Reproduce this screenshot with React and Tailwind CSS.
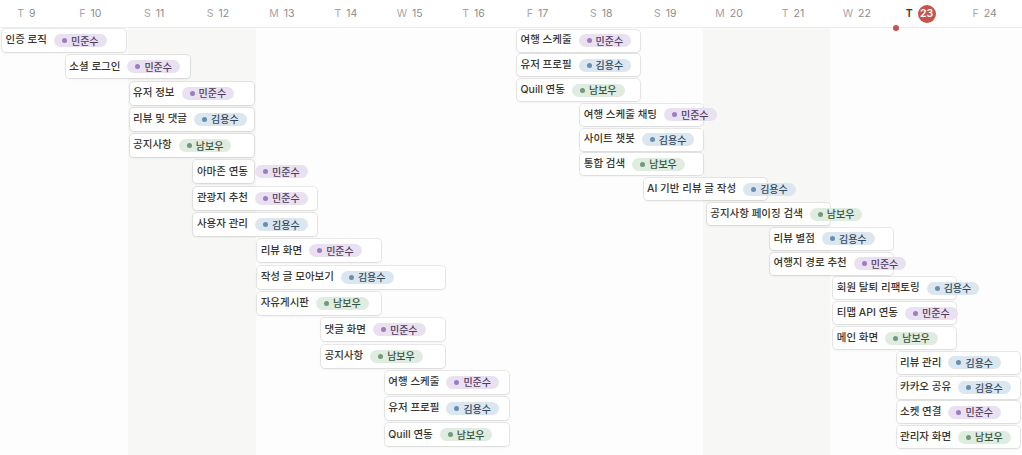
import React from "react";

const COL = 63.875;

const days = [
  ["T", "9"], ["F", "10"], ["S", "11"], ["S", "12"], ["M", "13"], ["T", "14"], ["W", "15"], ["T", "16"],
  ["F", "17"], ["S", "18"], ["S", "19"], ["M", "20"], ["T", "21"], ["W", "22"], ["T", "23"], ["F", "24"],
];
const shaded = [2, 3, 11, 12];

const left = [
  [0, 2, "인증 로직", "민준수"],
  [1, 2, "소셜 로그인", "민준수"],
  [2, 2, "유저 정보", "민준수"],
  [2, 2, "리뷰 및 댓글", "김용수"],
  [2, 2, "공지사항", "남보우"],
  [3, 1, "아마존 연동", "민준수"],
  [3, 2, "관광지 추천", "민준수"],
  [3, 2, "사용자 관리", "김용수"],
  [4, 2, "리뷰 화면", "민준수"],
  [4, 3, "작성 글 모아보기", "김용수"],
  [4, 2, "자유게시판", "남보우"],
  [5, 2, "댓글 화면", "민준수"],
  [5, 2, "공지사항", "남보우"],
  [6, 2, "여행 스케줄", "민준수"],
  [6, 2, "유저 프로필", "김용수"],
  [6, 2, "Quill 연동", "남보우"],
];

const right = [
  [8, "여행 스케줄", "민준수"],
  [8, "유저 프로필", "김용수"],
  [8, "Quill 연동", "남보우"],
  [9, "여행 스케줄 채팅", "민준수"],
  [9, "사이트 챗봇", "김용수"],
  [9, "통합 검색", "남보우"],
  [10, "AI 기반 리뷰 글 작성", "김용수"],
  [11, "공지사항 페이징 검색", "남보우"],
  [12, "리뷰 별점", "김용수"],
  [12, "여행지 경로 추천", "민준수"],
  [13, "회원 탈퇴 리팩토링", "김용수"],
  [13, "티맵 API 연동", "민준수"],
  [13, "메인 화면", "남보우"],
  [14, "리뷰 관리", "김용수"],
  [14, "카카오 공유", "김용수"],
  [14, "소켓 연결", "민준수"],
  [14, "관리자 화면", "남보우"],
];

const people = {
  민준수: { pill: "bg-[#e9e1f0] text-[#4f3a60]", dot: "bg-[#9d7cc4]" },
  김용수: { pill: "bg-[#dce6ee] text-[#2f4a5f]", dot: "bg-[#6590b5]" },
  남보우: { pill: "bg-[#dfecdf] text-[#34533e]", dot: "bg-[#6f9a7b]" },
};

function Pill({ name }) {
  const p = people[name];
  return (
    <span className={`inline-flex items-center h-[13px] pl-[8px] pr-[8px] gap-[4px] rounded-full text-[10px] font-medium leading-none shrink-0 ${p.pill}`}>
      <span className={`w-[5px] h-[5px] rounded-full ${p.dot}`} />
      {name}
    </span>
  );
}

function Card({ title, name, ml, w, h }) {
  return (
    <div
      className="flex items-center gap-[7px] pl-[3.5px] bg-white rounded-[4px] whitespace-nowrap overflow-visible shadow-[0_0_0_1px_rgba(15,15,15,0.08),0_1px_3px_rgba(15,15,15,0.08)]"
      style={{ marginLeft: ml, width: w, height: h }}
    >
      <span className="text-[10.5px] font-medium text-[#37352f] leading-none">{title}</span>
      <Pill name={name} />
    </div>
  );
}

export default function App() {
  return (
    <div
      className="w-[1022px] h-[455px] overflow-hidden bg-white flex flex-col relative"
      style={{ fontFamily: 'Inter, "Noto Sans CJK KR", sans-serif' }}
    >
      <div className="flex h-[28px] border-b border-[#ececeb] shrink-0">
        {days.map(([d, n], i) => {
          const today = i === 14;
          return (
            <div key={i} className="w-[63.875px] shrink-0 flex items-center justify-center pr-[11px] gap-[5px] text-[10.5px]">
              <span className={today ? "text-[#37352f] font-semibold" : "text-[#a7a6a2]"}>{d}</span>
              {today ? (
                <span className="w-[18px] h-[18px] rounded-full bg-[#c5544b] text-white font-semibold flex items-center justify-center">{n}</span>
              ) : (
                <span className="text-[#8d8c88]">{n}</span>
              )}
            </div>
          );
        })}
      </div>
      <div className="grid flex-1 relative">
        <div className="col-start-1 row-start-1 flex">
          {days.map((_, i) => (
            <div key={i} className={`w-[63.875px] shrink-0 h-full ${shaded.includes(i) ? "bg-[#f7f7f6]" : "bg-[#fdfdfd]"}`} />
          ))}
        </div>
        <div className="col-start-1 row-start-1 flex items-start">
          <div className="w-[511px] shrink-0 flex flex-col gap-[3.3px] pt-[1px]">
            {left.map(([c, span, t, n], i) => (
              <Card key={i} title={t} name={n} ml={2 + c * 63.8} w={span * 63.8 - 3.5} h={23} />
            ))}
          </div>
          <div className="w-[511px] shrink-0 flex flex-col gap-[2.8px] pt-[1.5px]">
            {right.map(([c, t, n], i) => (
              <Card key={i} title={t} name={n} ml={6 + (c - 8) * 63.25} w={123} h={22} />
            ))}
          </div>
        </div>
        <div className="absolute left-[893px] top-[-3.5px] w-[6px] h-[6px] rounded-full bg-[#c5544b]" />
      </div>
    </div>
  );
}
